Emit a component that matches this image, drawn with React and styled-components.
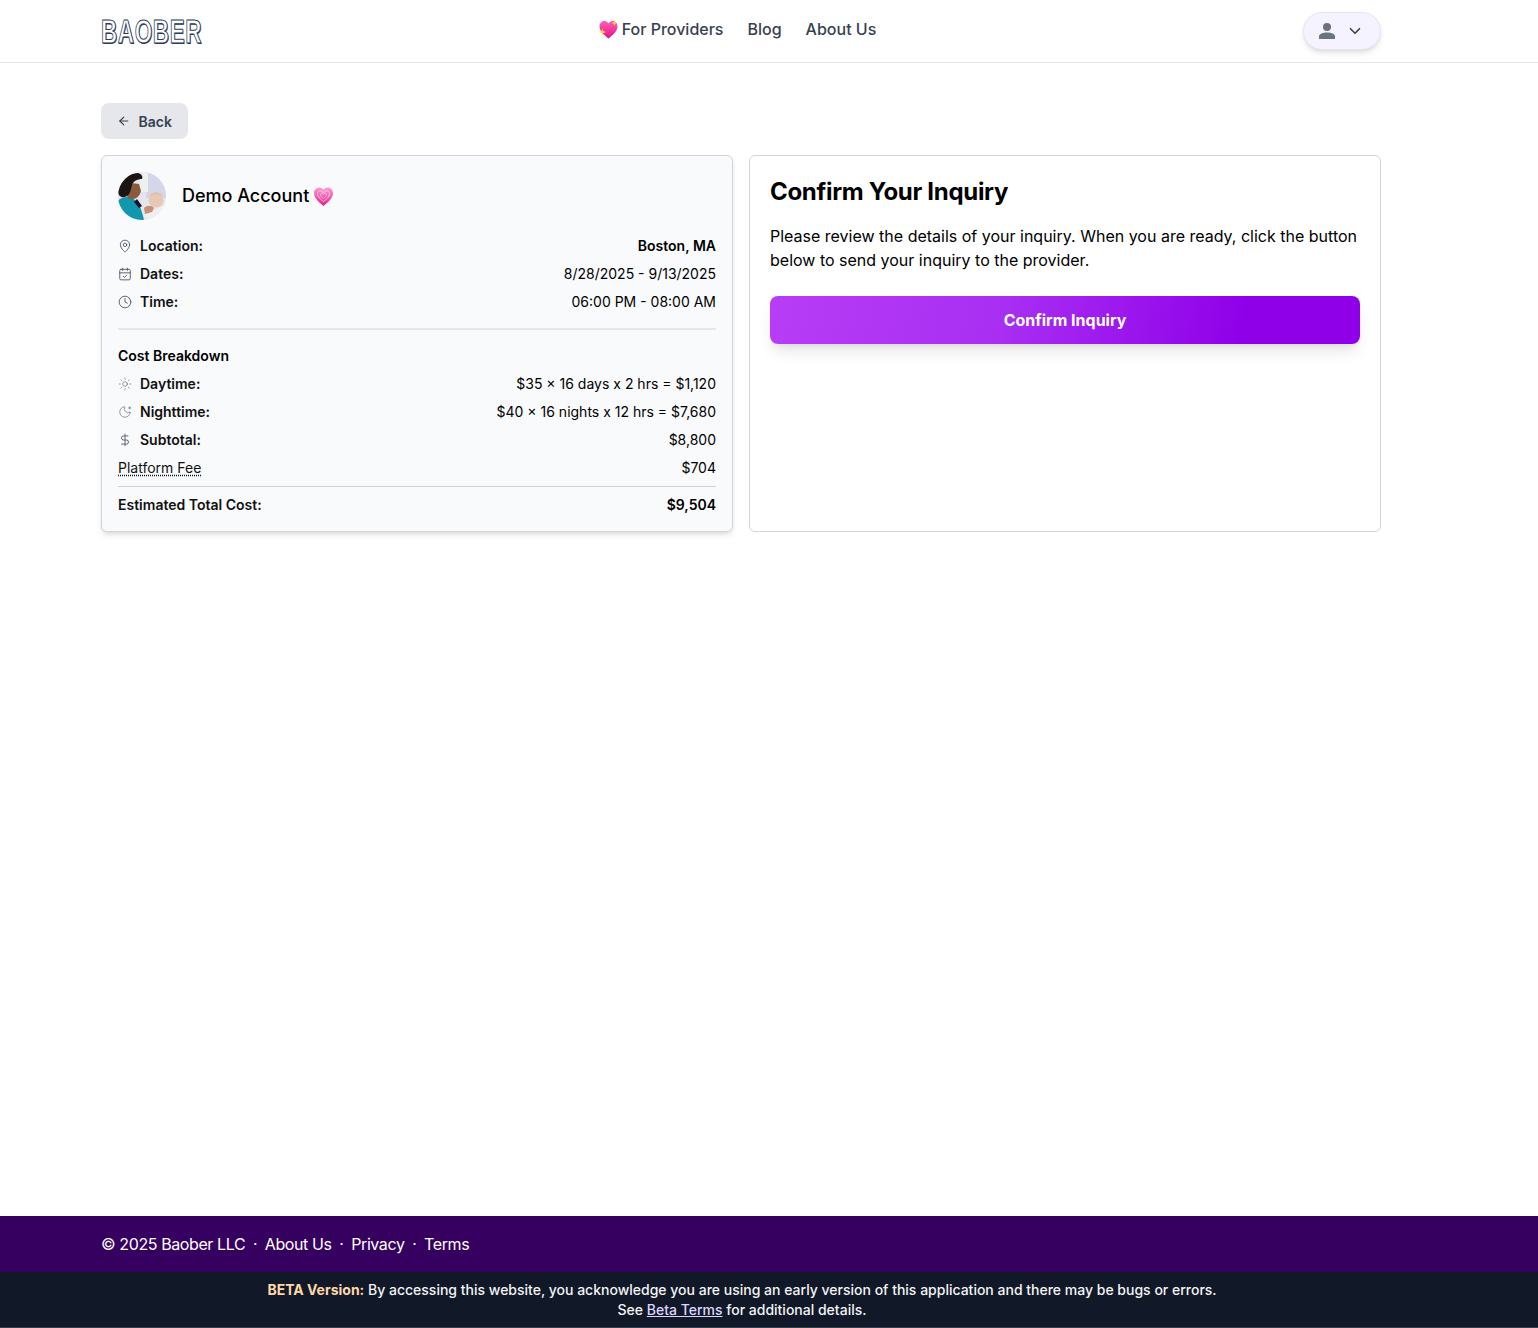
import styled, { createGlobalStyle } from 'styled-components';
import { ArrowLeft, CalendarCheck, ChevronDown, Clock, DollarSign, MapPin, MoonStar, Sun } from 'lucide-react';

const GlobalStyle = createGlobalStyle`
	html, body {
		margin: 0;
		padding: 0;
		background: #fff;
	}
	* {
		box-sizing: border-box;
	}
	body {
		font-family: 'Inter', 'Liberation Sans', sans-serif;
		color: #000;
	}
`;

const Page = styled.div`
	min-height: 1328px;
	display: flex;
	flex-direction: column;
`;

const Header = styled.header`
	height: 63px;
	flex: none;
	border-bottom: 1px solid #e5e7eb;
`;

const Container = styled.div`
	width: 1280px;
	margin: 0 0 0 101px;
`;

const HeaderInner = styled(Container)`
	height: 62px;
	display: grid;
	grid-template-columns: 1fr auto 1fr;
	align-items: center;
`;

const Logo = styled.div`
	font-family: 'Liberation Sans', sans-serif;
	font-weight: 700;
	font-size: 34px;
	line-height: 34px;
	letter-spacing: 1px;
	color: #fff;
	-webkit-text-stroke: 1px #2b3a5c;
	text-shadow: 1px 1px 0 #2b3a5c;
	transform: scaleX(0.66);
	transform-origin: left center;
	user-select: none;
`;

const Nav = styled.nav`
	display: flex;
	align-items: center;
	gap: 24px;
	margin: -4px 0 0 -8px;
`;

const NavLink = styled.a`
	display: flex;
	align-items: center;
	gap: 3px;
	font-size: 16px;
	font-weight: 500;
	line-height: 24px;
	color: #374151;
`;

const UserMenu = styled.button`
	justify-self: end;
	width: 78px;
	height: 38px;
	margin: -1px 0 0;
	display: flex;
	align-items: center;
	gap: 10px;
	padding: 0 14px;
	border: 1px solid #e5e7eb;
	border-radius: 19px;
	background: #f5f3ff;
	box-shadow: 0 4px 6px -1px rgba(0, 0, 0, 0.1), 0 2px 4px -2px rgba(0, 0, 0, 0.1);
	color: #374151;
`;

const Main = styled.main`
	flex: 1;
	padding: 40px 0 0;
`;

const BackButton = styled.button`
	display: flex;
	align-items: center;
	gap: 8px;
	height: 36px;
	width: 87px;
	padding: 0 16px;
	border: 0;
	border-radius: 8px;
	background: #e5e7eb;
	font-family: inherit;
	font-size: 14px;
	font-weight: 600;
	color: #374151;
`;

const Columns = styled.div`
	display: grid;
	grid-template-columns: 632px 632px;
	gap: 16px;
	margin: 16px 0 0;
`;

const SummaryCard = styled.section`
	height: 377px;
	padding: 16px;
	border: 1px solid #d1d5db;
	border-radius: 6px;
	background: #f9fafb;
	box-shadow: 0 4px 6px -1px rgba(0, 0, 0, 0.1), 0 2px 4px -2px rgba(0, 0, 0, 0.1);
`;

const ProviderRow = styled.div`
	display: flex;
	align-items: center;
	gap: 16px;
	margin: 0 0 12px;
`;

const Avatar = styled.svg`
	width: 48px;
	height: 48px;
	border-radius: 50%;
	display: block;
`;

const ProviderName = styled.div`
	display: flex;
	align-items: center;
	gap: 4px;
	font-size: 18px;
	font-weight: 500;
	line-height: 28px;
`;

const Row = styled.div`
	display: flex;
	align-items: center;
	justify-content: space-between;
	height: 28px;
	font-size: 14px;
	line-height: 20px;
`;

const RowLabel = styled.span`
	display: flex;
	align-items: center;
	gap: 8px;
	font-weight: ${props => props.$bold ? 600 : 400};
	color: #111;

	svg {
		width: 14px;
		height: 14px;
		color: #4b5563;
		flex: none;
	}
`;

const RowValue = styled.span`
	font-weight: ${props => props.$bold ? 600 : 400};
`;

const ThickRule = styled.hr`
	margin: 12px 0;
	border: 0;
	border-top: 2px solid #e5e7eb;
`;

const SectionTitle = styled.div`
	height: 28px;
	display: flex;
	align-items: center;
	font-size: 14px;
	font-weight: 600;
	line-height: 20px;
`;

const FeeLabel = styled.span`
	text-decoration: underline dotted;
	text-underline-offset: 2px;
	color: #111;
`;

const ThinRule = styled.hr`
	margin: 4px 0 0;
	border: 0;
	border-top: 1px solid #cbd5e1;
`;

const TotalRow = styled(Row)`
	height: 36px;
`;

const ConfirmCard = styled.section`
	height: 377px;
	padding: 20px;
	border: 1px solid #d1d5db;
	border-radius: 6px;
	background: #fff;
`;

const ConfirmTitle = styled.h1`
	margin: 0;
	font-size: 24px;
	font-weight: 700;
	line-height: 32px;
	letter-spacing: -0.3px;
`;

const ConfirmText = styled.p`
	margin: 16px 0 24px;
	font-size: 16px;
	line-height: 24px;
`;

const ConfirmButton = styled.button`
	display: block;
	width: 100%;
	height: 48px;
	border: 0;
	border-radius: 8px;
	background: linear-gradient(100deg, #b83df6 0%, #a82ef2 40%, #8f00e8 80%, #8f00e8 100%);
	box-shadow: 0 10px 15px -3px rgba(0, 0, 0, 0.1), 0 4px 6px -4px rgba(0, 0, 0, 0.1);
	font-family: inherit;
	font-size: 16px;
	font-weight: 700;
	color: #fff;
`;

const FooterBar = styled.footer`
	height: 56px;
	flex: none;
	background: #360061;
`;

const FooterInner = styled(Container)`
	height: 56px;
	display: flex;
	align-items: center;
	font-size: 16px;
	line-height: 24px;
	letter-spacing: -0.4px;
	color: #fff;
`;

const Dot = styled.span`
	margin: 0 8px;
	font-weight: 700;
	font-size: 12px;
`;

const BetaBar = styled.div`
	height: 56px;
	flex: none;
	padding: 8px 0 0;
	border-bottom: 1px solid #374151;
	background: #111827;
	font-size: 14px;
	line-height: 20px;
	font-weight: 500;
	text-align: center;
	color: #f3f4f6;
	padding-right: 54px;
`;

const BetaTag = styled.span`
	font-weight: 700;
	color: #fed7aa;
`;

const BetaLink = styled.a`
	color: #ddd6fe;
	text-decoration: underline;
`;

const SparkleHeart = () => (
	<svg width="21" height="21" viewBox="0 0 21 21">
		<defs>
			<linearGradient id="sparkleHeartFill" x1="0" y1="0" x2="0" y2="1">
				<stop offset="0" stopColor="#ff5fb0" />
				<stop offset="1" stopColor="#e0148c" />
			</linearGradient>
		</defs>
		<path d="M10.5 19.5 C7 16.5 1.5 12.5 1.5 7.2 C1.5 4 4 2 6.5 2 C8.3 2 9.7 3 10.5 4.6 C11.3 3 12.7 2 14.5 2 C17 2 19.5 4 19.5 7.2 C19.5 12.5 14 16.5 10.5 19.5 Z" fill="url(#sparkleHeartFill)" />
		<path d="M16.5 1 L17.3 3.2 L19.5 4 L17.3 4.8 L16.5 7 L15.7 4.8 L13.5 4 L15.7 3.2 Z" fill="#ffd23f" />
		<path d="M4.5 9.5 L5.4 12.1 L8 13 L5.4 13.9 L4.5 16.5 L3.6 13.9 L1 13 L3.6 12.1 Z" fill="#ffd23f" />
	</svg>
);

const GlowHeart = () => (
	<svg width="21" height="21" viewBox="0 0 21 21">
		<defs>
			<linearGradient id="glowHeartFill" x1="0" y1="0" x2="0" y2="1">
				<stop offset="0" stopColor="#ff9ccf" />
				<stop offset="1" stopColor="#e8198f" />
			</linearGradient>
		</defs>
		<path d="M10.5 20 C7 17 1 12.8 1 7 C1 3.6 3.6 1.5 6.3 1.5 C8.2 1.5 9.6 2.5 10.5 4 C11.4 2.5 12.8 1.5 14.7 1.5 C17.4 1.5 20 3.6 20 7 C20 12.8 14 17 10.5 20 Z" fill="url(#glowHeartFill)" />
		<path d="M10.5 15.5 C8 13.5 4.5 11 4.5 7.8 C4.5 6 5.8 4.8 7.2 4.8 C8.7 4.8 9.8 5.8 10.5 7 C11.2 5.8 12.3 4.8 13.8 4.8 C15.2 4.8 16.5 6 16.5 7.8 C16.5 11 13 13.5 10.5 15.5 Z" fill="none" stroke="#ffd0e8" strokeWidth="1" />
		<path d="M10.5 12.5 C9.2 11.4 7.5 10.2 7.5 8.7 C7.5 7.8 8.2 7.2 8.9 7.2 C9.6 7.2 10.2 7.8 10.5 8.5 C10.8 7.8 11.4 7.2 12.1 7.2 C12.8 7.2 13.5 7.8 13.5 8.7 C13.5 10.2 11.8 11.4 10.5 12.5 Z" fill="none" stroke="#ffd0e8" strokeWidth="0.8" />
	</svg>
);

const AvatarPicture = () => (
	<Avatar viewBox="0 0 48 48">
		<rect width="48" height="48" fill="#e4e5ee" />
		<rect x="28" y="0" width="20" height="26" fill="#d5d6ea" />
		<rect x="22" y="0" width="8" height="20" fill="#eef0ee" />
		<path d="M0 48 V29 C4 24 12 24 17 28 C22 32 24 40 26 48 Z" fill="#1397ae" />
		<path d="M9 24 C10 17 11 13 13 11 L21 12 L23 19 C22 24 18 27 15 27 C13 28 10 27 9 24 Z" fill="#8a5a3c" />
		<path d="M0 20 C1 10 8 1 20 1 C24 2 25 5 24 7 C20 7 15 9 14 13 C13 18 12 22 9 24 C6 26 1 26 0 20 Z" fill="#1b1513" />
		<path d="M19 27 L24 34 L21 36 L16 30 Z" fill="#141428" />
		<path d="M26 42 C30 40 38 38 44 34 L48 36 V44 C40 46 32 48 26 46 Z" fill="#efeff2" />
		<circle cx="38" cy="28" r="7.5" fill="#e8c7b4" />
		<path d="M31 24 C33 19 42 19 45 24 C41 22 35 22 31 24 Z" fill="#d9c4ad" />
		<path d="M26 36 C29 33 33 33 36 36 L34 40 L27 42 Z" fill="#c88f70" />
	</Avatar>
);

const UserIcon = () => (
	<svg width="18" height="18" viewBox="0 0 18 18" fill="#6b7280">
		<circle cx="9" cy="5" r="4" />
		<path d="M1 17 V14.5 C1 11.8 5 10.5 9 10.5 C13 10.5 17 11.8 17 14.5 V17 Z" />
	</svg>
);

const App = () => {
	return (
		<Page>
			<GlobalStyle />
			<Header>
				<HeaderInner>
					<Logo>BAOBER</Logo>
					<Nav>
						<NavLink><SparkleHeart />For Providers</NavLink>
						<NavLink>Blog</NavLink>
						<NavLink>About Us</NavLink>
					</Nav>
					<UserMenu>
						<UserIcon />
						<ChevronDown size={18} strokeWidth={2.2} />
					</UserMenu>
				</HeaderInner>
			</Header>
			<Main>
				<Container>
					<BackButton>
						<ArrowLeft size={14} strokeWidth={2} />
						Back
					</BackButton>
					<Columns>
						<SummaryCard>
							<ProviderRow>
								<AvatarPicture />
								<ProviderName>Demo Account <GlowHeart /></ProviderName>
							</ProviderRow>
							<Row>
								<RowLabel $bold><MapPin strokeWidth={1.5} />Location:</RowLabel>
								<RowValue $bold>Boston, MA</RowValue>
							</Row>
							<Row>
								<RowLabel $bold><CalendarCheck strokeWidth={1.5} />Dates:</RowLabel>
								<RowValue>8/28/2025 - 9/13/2025</RowValue>
							</Row>
							<Row>
								<RowLabel $bold><Clock strokeWidth={1.5} />Time:</RowLabel>
								<RowValue>06:00 PM - 08:00 AM</RowValue>
							</Row>
							<ThickRule />
							<SectionTitle>Cost Breakdown</SectionTitle>
							<Row>
								<RowLabel $bold><Sun strokeWidth={1} />Daytime:</RowLabel>
								<RowValue>$35 x 16 days x 2 hrs = $1,120</RowValue>
							</Row>
							<Row>
								<RowLabel $bold><MoonStar strokeWidth={1} />Nighttime:</RowLabel>
								<RowValue>$40 x 16 nights x 12 hrs = $7,680</RowValue>
							</Row>
							<Row>
								<RowLabel $bold><DollarSign strokeWidth={1.5} />Subtotal:</RowLabel>
								<RowValue>$8,800</RowValue>
							</Row>
							<Row>
								<FeeLabel>Platform Fee</FeeLabel>
								<RowValue>$704</RowValue>
							</Row>
							<ThinRule />
							<TotalRow>
								<RowLabel $bold>Estimated Total Cost:</RowLabel>
								<RowValue $bold>$9,504</RowValue>
							</TotalRow>
						</SummaryCard>
						<ConfirmCard>
							<ConfirmTitle>Confirm Your Inquiry</ConfirmTitle>
							<ConfirmText>
								Please review the details of your inquiry. When you are ready, click the button below to send your inquiry to the provider.
							</ConfirmText>
							<ConfirmButton>Confirm Inquiry</ConfirmButton>
						</ConfirmCard>
					</Columns>
				</Container>
			</Main>
			<FooterBar>
				<FooterInner>
					© 2025 Baober LLC
					<Dot>·</Dot>
					About Us
					<Dot>·</Dot>
					Privacy
					<Dot>·</Dot>
					Terms
				</FooterInner>
			</FooterBar>
			<BetaBar>
				<BetaTag>BETA Version:</BetaTag> By accessing this website, you acknowledge you are using an early version of this application and there may be bugs or errors.
				<br />
				See <BetaLink>Beta Terms</BetaLink> for additional details.
			</BetaBar>
		</Page>
	);
};

export default App;
